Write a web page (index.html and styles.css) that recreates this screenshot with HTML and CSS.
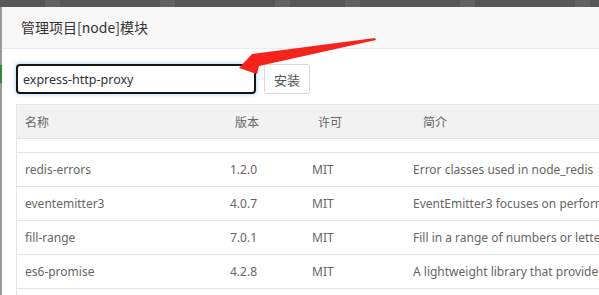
FILE: index.html
```html
<!DOCTYPE html>
<html lang="zh-CN">
<head>
    <meta charset="UTF-8">
    <meta name="viewport" content="width=device-width, initial-scale=1.0">
    <title>管理项目[node]模块</title>
    <link rel="stylesheet" href="styles.css">
</head>
<body>
    <!-- Dimmed page behind the dialog -->
    <div class="topbar"></div>

    <div class="main">
        <div class="page-edge"><span class="edge-green"></span></div>

        <!-- Module dialog -->
        <div class="modal">
            <div class="modal-head">管理项目[node]模块</div>

            <div class="modal-body">
                <div class="install">
                    <input type="text" class="pkg-input" value="express-http-proxy">
                    <button class="btn">安装</button>
                </div>

                <div class="grid">
                    <div class="grid-head">
                        <div class="hcell c-name">名称</div>
                        <div class="hcell c-ver">版本</div>
                        <div class="hcell c-lic">许可</div>
                        <div class="hcell c-desc">简介</div>
                    </div>
                    <div class="grid-body">
                        <div class="row partial"></div>
                        <div class="row">
                            <div class="cell c-name">redis-errors</div>
                            <div class="cell c-ver">1.2.0</div>
                            <div class="cell c-lic">MIT</div>
                            <div class="cell c-desc">Error classes used in node_redis</div>
                        </div>
                        <div class="row">
                            <div class="cell c-name">eventemitter3</div>
                            <div class="cell c-ver">4.0.7</div>
                            <div class="cell c-lic">MIT</div>
                            <div class="cell c-desc">EventEmitter3 focuses on performance</div>
                        </div>
                        <div class="row">
                            <div class="cell c-name">fill-range</div>
                            <div class="cell c-ver">7.0.1</div>
                            <div class="cell c-lic">MIT</div>
                            <div class="cell c-desc">Fill in a range of numbers or letters</div>
                        </div>
                        <div class="row">
                            <div class="cell c-name">es6-promise</div>
                            <div class="cell c-ver">4.2.8</div>
                            <div class="cell c-lic">MIT</div>
                            <div class="cell c-desc">A lightweight library that provides</div>
                        </div>
                        <div class="row"></div>
                    </div>
                </div>
            </div>
        </div>

        <!-- Red annotation arrow drawn over the screenshot -->
        <svg class="arrow" width="599" height="295" viewBox="0 0 599 295">
            <polygon points="239,68 252,54 375,38 376,40 259,66 257,74" fill="#f5231b"/>
        </svg>
    </div>
</body>
</html>
```

FILE: styles.css
```css
/* General styling */
* {
    box-sizing: border-box;
}

body {
    margin: 0;
    width: 599px;
    height: 295px;
    overflow: hidden;
    font-family: "Noto Sans", "Noto Sans CJK SC", sans-serif;
    font-size: 12px;
    color: #666;
    background-color: #fff;
}

/* Dark strip of the page behind */
.topbar {
    height: 7px;
    background-color: #575757;
    background-image: linear-gradient(90deg,
        transparent 45px, #626262 45px, #626262 60px, transparent 60px,
        transparent 160px, #626262 160px, #626262 175px, transparent 175px,
        transparent 275px, #626262 275px, #626262 290px, transparent 290px,
        transparent 345px, #626262 345px, #626262 360px, transparent 360px,
        transparent 460px, #626262 460px, #626262 475px, transparent 475px,
        transparent 575px, #626262 575px, #626262 590px, transparent 590px);
}

.main {
    position: relative;
    display: flex;
    height: 288px;
}

.page-edge {
    width: 2px;
    flex: none;
    background-color: #9a9a9a;
    padding-top: 58px;
}

.edge-green {
    display: block;
    height: 18px;
    background-color: #2f8a3a;
}

/* Dialog */
.modal {
    flex: 1;
    min-width: 0;
    overflow: hidden;
    background-color: #fff;
}

.modal-head {
    height: 42px;
    padding: 10px 0 0 19px;
    background-color: #f8f8f8;
    border-bottom: 1px solid #eaeaea;
    font-family: "Noto Sans CJK SC", "Noto Sans", sans-serif;
    font-size: 14px;
    line-height: 20px;
    color: #333;
}

.modal-body {
    padding: 15px 0 0 14px;
}

/* Install form */
.install {
    display: flex;
    gap: 8px;
    height: 30px;
}

.pkg-input {
    width: 240px;
    height: 30px;
    margin: 0;
    padding: 0 5px;
    border: 2px solid #151515;
    border-radius: 4px;
    box-shadow: 0 0 4px 1px rgba(110, 175, 235, 0.45);
    font-family: "Noto Sans", sans-serif;
    font-size: 12.5px;
    color: #333;
    outline: none;
}

.btn {
    width: 46px;
    height: 30px;
    margin: 0;
    padding: 0;
    border: 1px solid #d9d9d9;
    border-radius: 3px;
    background-color: #fff;
    font-family: "Noto Sans CJK SC", sans-serif;
    font-size: 13px;
    color: #555;
}

/* Module table */
.grid {
    margin-top: 10px;
    width: 700px;
    border-top: 1px solid #e6e6e6;
    border-left: 1px solid #e6e6e6;
}

.grid-head {
    display: flex;
    height: 34px;
    align-items: center;
    background-color: #f2f2f2;
    border-bottom: 1px solid #e2e2e2;
    font-family: "Noto Sans CJK SC", "Noto Sans", sans-serif;
}

.hcell {
    flex: none;
    padding-left: 8px;
}

.grid-head .c-name { width: 210px; }
.grid-head .c-ver  { width: 83px; }
.grid-head .c-lic  { width: 105px; }

.row {
    display: flex;
    align-items: center;
    height: 34px;
    border-bottom: 1px solid #e2e2e2;
}

.row.partial {
    height: 14px;
}

.cell {
    flex: none;
    padding-left: 8px;
    white-space: nowrap;
}

.row .c-name { width: 205px; }
.row .c-ver  { width: 82px; }
.row .c-lic  { width: 101px; }

/* Annotation */
.arrow {
    position: absolute;
    left: 0;
    top: -7px;
    pointer-events: none;
}
```
